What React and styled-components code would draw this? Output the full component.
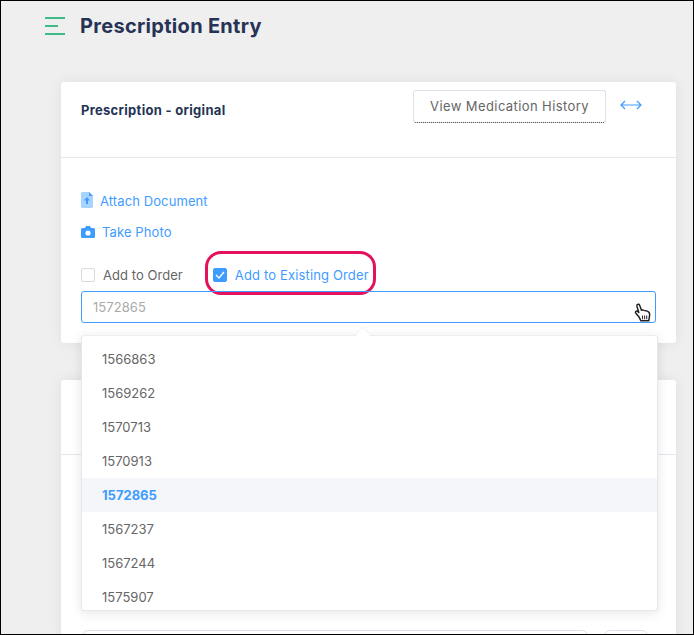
import React from 'react';
import styled, { createGlobalStyle } from 'styled-components';

const Global = createGlobalStyle`
  html, body { margin: 0; padding: 0; background: #efefef; }
  body { font-family: Inter, "Liberation Sans", sans-serif; }
  * { box-sizing: border-box; }
`;
const Frame = styled.div`
  width: 694px; height: 635px; border: 1px solid #000; overflow: hidden;
  background: #efefef; position: relative;
`;
const Header = styled.header`
  display: flex; align-items: center; height: 50px; padding-left: 44px; gap: 15px;
`;
const Title = styled.h1`
  margin: 0; font-size: 20px; font-weight: 700; color: #263355; line-height: 48px; letter-spacing: .3px;
`;
const Stack = styled.main`
  padding: 31px 17px 0 60px; display: flex; flex-direction: column; gap: 37px;
`;
const Card = styled.section`
  background: #fff; border-radius: 3px; box-shadow: 0 0 14px rgba(0,0,0,.07);
`;
const CardTop = styled.div`
  height: 76px; border-bottom: 1px solid #e6e7ee; display: flex; align-items: flex-start;
  padding: 8px 34px 0 20px;
`;
const CardTitle = styled.h2`
  margin: 0; font-size: 13px; font-weight: 700; color: #263355; line-height: 40px; flex: 1; letter-spacing: .3px;
`;
const HistoryButton = styled.button`
  width: 193px; height: 33px; background: #fff; border: 1px solid #dfe0ea; border-radius: 3px;
  font: 400 13px Inter, sans-serif; color: #666; padding: 0 0 2px; margin-right: 14px;
  border-bottom: 1px dotted #333; letter-spacing: .4px;
`;
const CardBody = styled.div`
  padding: 33px 20px 20px; height: 185px; display: flex; flex-direction: column;
`;
const LinkRow = styled.a`
  display: flex; align-items: center; gap: ${p => p.$gap}px; height: 22px; margin-bottom: 10px;
  color: #3f9cff; font-size: 13px; letter-spacing: .1px; font-weight: 400;
`;
const Options = styled.div`
  display: flex; align-items: center; margin-top: 12px; height: 22px; position: relative;
`;
const Option = styled.label`
  display: flex; align-items: center; gap: 8px; font-size: 13px; margin-right: ${p => p.$mr}px;
  color: ${p => p.$on ? '#3f9cff' : '#666'}; letter-spacing: ${p => p.$on ? '.15px' : '.05px'};
`;
const Box = styled.span`
  width: 14px; height: 14px; border-radius: 2px; display: flex; align-items: center; justify-content: center;
  background: ${p => p.$on ? '#3f9cff' : '#fff'};
  border: 1px solid ${p => p.$on ? '#3f9cff' : '#d9d9df'};
`;
const Highlight = styled.span`
  position: absolute; left: 124px; top: -13px; width: 171px; height: 44px;
  border: 3px solid #e5115f; border-radius: 16px; pointer-events: none;
`;
const Field = styled.div`
  margin-top: 6px; height: 32px; border: 1px solid #3f9cff; border-radius: 3px; color: #aaa;
  font-size: 13px; line-height: 31px; padding-left: 11px; position: relative; letter-spacing: .05px;
`;
const Cursor = styled.svg`
  position: absolute; right: 4px; top: 11px;
`;
const Dropdown = styled.ul`
  position: absolute; left: 80px; top: 334px; width: 577px; height: 276px; margin: 0;
  padding: 6px 0 0; list-style: none; background: #fff; border-radius: 3px; overflow: hidden;
  border: 1px solid #e6e7ee; border-top-color: #eee;
  box-shadow: 0 2px 12px rgba(0,0,0,.1);
`;
const Caret = styled.span`
  position: absolute; left: 357px; top: 329px; width: 10px; height: 10px; background: #fff;
  transform: rotate(45deg); z-index: 2; box-shadow: -1px -1px 1px rgba(0,0,0,.04);
`;
const Item = styled.li`
  height: 34px; line-height: 34px; padding-left: 20px; font-size: 13px;
  color: ${p => p.$sel ? '#3f9cff' : '#666'}; font-weight: ${p => p.$sel ? 700 : 400};
  background: ${p => p.$sel ? '#f5f6fa' : 'transparent'};
`;
const LowerCard = styled(Card)`
  height: 260px; position: relative;
`;
const LowerRule = styled.div`
  height: 75px; border-bottom: 1px solid #e6e7ee;
`;
const LowerFields = styled.div`
  display: flex; gap: 16px; padding: 175px 28px 0 21px;
`;
const GhostInput = styled.div`
  height: 32px; border: 1px solid #dfe0ea; border-radius: 6px; flex: ${p => p.$w ? `0 0 ${p.$w}px` : 1};
`;

const orders = ['1566863','1569262','1570713','1570913','1572865','1567237','1567244','1575907'];

export default function App() {
  return (
    <Frame>
      <Global />
      <Header>
        <svg width="20" height="20" viewBox="0 0 20 20"><g fill="#3dba85"><rect y="1" width="20" height="2"/><rect y="9" width="13" height="2"/><rect y="17" width="20" height="2"/></g></svg>
        <Title>Prescription Entry</Title>
      </Header>
      <Stack>
        <Card>
          <CardTop>
            <CardTitle>Prescription - original</CardTitle>
            <HistoryButton>View Medication History</HistoryButton>
            <svg width="22" height="12" viewBox="0 0 22 12" style={{marginTop: 9}} fill="none" stroke="#3f9cff" strokeWidth="1.2"><path d="M1 6h20M5 2 1 6l4 4M17 2l4 4-4 4"/></svg>
          </CardTop>
          <CardBody>
            <LinkRow $gap={7}>
              <svg width="12" height="16" viewBox="0 0 12 16" style={{marginTop: -3}}><path d="M1.5 0H8l4 4v10.5a1.5 1.5 0 0 1-1.5 1.5h-9A1.5 1.5 0 0 1 0 14.5v-13A1.5 1.5 0 0 1 1.5 0Z" fill="#a9d3ff"/><path d="M8 0l4 4H8Z" fill="#3f9cff"/><path d="M6 5 3 8.5h2V12h2V8.5h2Z" fill="#3f9cff"/></svg>
              Attach Document
            </LinkRow>
            <LinkRow $gap={7}>
              <svg width="14" height="12" viewBox="0 0 14 12"><path d="M1.5 2H4l1-2h4l1 2h2.5A1.5 1.5 0 0 1 14 3.500v7a1.5 1.500 0 0 1-1.500 1.500h-11A1.500 1.500 0 0 1 0 10.500v-7A1.500 1.500 0 0 1 1.500 2Z" fill="#3f9cff"/><circle cx="7" cy="7" r="2.600" fill="#fff"/></svg>
              Take Photo
            </LinkRow>
            <Options>
              <Option $mr={30}><Box />Add to Order</Option>
              <Option $on><Box $on><svg width="10" height="8" viewBox="0 0 10 8" fill="none" stroke="#fff" strokeWidth="1.300"><path d="M1 4l3 3 5-6"/></svg></Box>Add to Existing Order</Option>
              <Highlight />
            </Options>
            <Field>
              1572865
              <Cursor width="17" height="21" viewBox="0 0 16 20"><path d="M3 1.500c1-.8 2-.3 2.300.700L7 7l1-.5 1.500.5 1.500.300L13 8c1.500.700 2 2 1.800 3.500l-.8 5.500H6.500L4.500 13 1.500 9.500c-.8-1.200.700-2.300 1.800-1.500L4.500 9 2.800 3.500c-.2-.8-.2-1.500.2-2Z" fill="#fff" stroke="#222" strokeWidth="1.400" strokeLinejoin="round"/><path d="M8 12v3.500M10 12v3.500M12 12v3.500" stroke="#333"/></Cursor>
            </Field>
          </CardBody>
        </Card>
        <LowerCard>
          <LowerRule />
          <LowerFields>
            <GhostInput />
            <GhostInput $w={44} />
          </LowerFields>
        </LowerCard>
      </Stack>
      <Caret />
      <Dropdown>
        {orders.map((o, i) => <Item key={o} $sel={i === 4}>{o}</Item>)}
      </Dropdown>
    </Frame>
  );
}
